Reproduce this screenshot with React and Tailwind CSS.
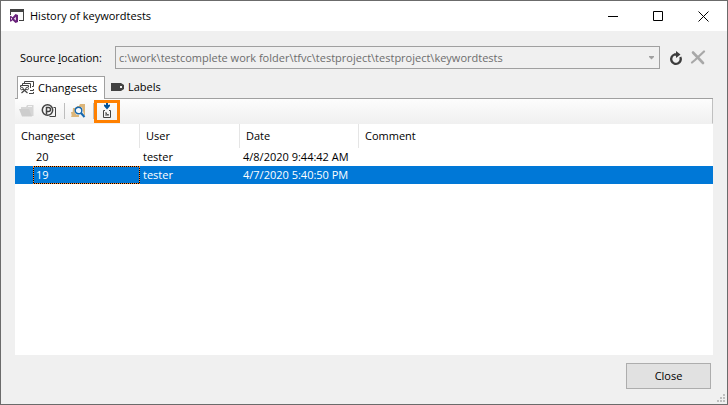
import { useState } from "react";

function VisualStudioIcon() {
  return (
    <svg width="16" height="16" viewBox="0 0 16 16" aria-hidden="true">
      <path d="M1 1h14v12H10v-1h4V4H2v3H1z" fill="#424242" />
      <path d="M2 4h12v8H9V6H2z" fill="#fafafa" />
      <path
        fillRule="evenodd"
        d="M6.500 6 9 7v7l-2.500 1L3.600 12.200 1.800 13.700 1 13.200V8.200l.8-.5 1.800 1.500zM6.800 8.800 5 10.700l1.800 1.900zM2 9.400v2.600l1.200-1.300z"
        fill="#68217a"
      />
    </svg>
  );
}

function ChangesetsIcon() {
  return (
    <svg width="15" height="16" viewBox="0 0 15 16" aria-hidden="true" fill="none" stroke="#424242">
      <path d="M4.500 3V1.500h9v5H12" />
      <path d="M2.500 5V3.500h8v4" />
      <path d="M.5 7V5.500h8V7" />
      <path d="M10 10.500h3.500V9M9 13.500h4.500V12M10 7.500h1" />
      <circle cx="1.800" cy="8.500" r="1.300" />
      <circle cx="7.200" cy="8.500" r="1.300" />
      <path d="M3 9l4.500 4M6 9l-4.500 4" strokeWidth="1.200" />
    </svg>
  );
}

function LabelIcon() {
  return (
    <svg width="14" height="10" viewBox="0 0 14 10" aria-hidden="true">
      <path fillRule="evenodd" d="M0 1h10l3 2v4l-3 2H0zM9 4v2h2V4z" fill="#424242" />
    </svg>
  );
}

function FolderIcon() {
  return (
    <svg width="16" height="16" viewBox="0 0 16 16" aria-hidden="true">
      <path d="M2 6V4h5l1-2h6.500v11H12z" fill="#d6d6d6" />
      <path d="M9 3.500h4" stroke="#f4f4f4" />
      <path d="M0 6h10l3 7.500H3z" fill="#cdcdcd" />
    </svg>
  );
}

function CompareIcon() {
  return (
    <svg width="16" height="16" viewBox="0 0 16 16" aria-hidden="true" fill="none" stroke="#424242">
      <circle cx="6.500" cy="7" r="5.200" strokeWidth="1.500" />
      <path d="M5.500 11.500v-7h2a2 2 0 0 1 0 4h-2" strokeWidth="1.500" />
      <path d="M12.500 4.500h2v9H8.500" />
    </svg>
  );
}

function SearchFolderIcon() {
  return (
    <svg width="16" height="16" viewBox="0 0 16 16" aria-hidden="true">
      <path d="M7 3h2l1-2h5v11h-1L12 4H7z" fill="#dcb67a" />
      <path d="M3 5h3L4.500 8 6 11.500 9 12v2H1l1.500-3z" fill="#dcb67a" />
      <path d="M1 9h3l3 5H2z" fill="#dcb67a" />
      <circle cx="8.500" cy="7.500" r="3.300" fill="#f8fbff" stroke="#1768ad" strokeWidth="1.400" />
      <path d="m11 10 3.500 4" stroke="#1768ad" strokeWidth="2" />
    </svg>
  );
}

function GetVersionIcon() {
  return (
    <svg width="16" height="16" viewBox="0 0 16 16" aria-hidden="true">
      <path d="M7 0h2v2l2-.5V3L8 6.500 5 3V1.500l2 .5z" fill="#00539c" />
      <path d="M6 7.500H4.500v7h7v-7H10" fill="none" stroke="#424242" />
      <path d="M7.500 9.500v2h2" fill="none" stroke="#424242" strokeWidth=".9" />
      <path d="M6.500 9v3.500h3V11" fill="none" stroke="#424242" strokeWidth=".5" />
    </svg>
  );
}

function RefreshIcon() {
  return (
    <svg width="14" height="16" viewBox="0 0 14 16" aria-hidden="true">
      <path d="M8 4.500H5.500A4.800 4.800 0 1 0 11.300 7" fill="none" stroke="#3c3c3c" strokeWidth="2.300" />
      <path d="M7 1l4.500 3.500L7 8z" fill="#3c3c3c" />
    </svg>
  );
}

function DeleteIcon() {
  return (
    <svg width="16" height="16" viewBox="0 0 16 16" aria-hidden="true">
      <path d="M3 2.500 13 13" stroke="#a8a8a8" strokeWidth="2.600" strokeLinecap="round" />
      <path d="M2 12.500 5 10 14 1.500" fill="none" stroke="#a8a8a8" strokeWidth="2.200" strokeLinecap="round" />
    </svg>
  );
}

const changesets = [
  { id: "20", user: "tester", date: "4/8/2020 9:44:42 AM", comment: "" },
  { id: "19", user: "tester", date: "4/7/2020 5:40:50 PM", comment: "" },
];

const windowButton = "flex h-full w-[45px] items-center justify-center";
const headCell = "border-r border-[#e5e5e5] pl-1.5 text-left font-normal";

export default function App() {
  const [selected, setSelected] = useState("19");

  return (
    <div className="flex min-h-screen flex-col border border-[#6b6b6b] bg-[#f0f0f0] font-['Open_Sans','Noto_Sans',sans-serif] text-[11px] leading-4 text-black">
      <header className="flex h-[30px] items-center bg-white pr-px pl-2">
        <VisualStudioIcon />
        <h1 className="ml-[5px] flex-1">History of keywordtests</h1>
        <button aria-label="Minimize" className={windowButton}>
          <svg width="11" height="11" viewBox="0 0 11 11">
            <path d="M0 5.500h10" stroke="#000" />
          </svg>
        </button>
        <button aria-label="Maximize" className={windowButton}>
          <svg width="11" height="11" viewBox="0 0 11 11">
            <path d="M.5 .5h9v9h-9z" fill="none" stroke="#000" />
          </svg>
        </button>
        <button aria-label="Close window" className={windowButton}>
          <svg width="11" height="11" viewBox="0 0 11 11">
            <path d="m.5 .5 10 10m0-10-10 10" stroke="#000" />
          </svg>
        </button>
      </header>

      <div className="mt-[15px] flex h-[23px] items-center pr-5 pl-[19px]">
        <label htmlFor="source" className="w-[95px] shrink-0 whitespace-nowrap">
          Source <span className="underline">l</span>ocation:
        </label>
        <div className="relative h-full min-w-0 flex-1">
          <select
            id="source"
            disabled
            className="h-full w-full appearance-none border border-[#a0a0a0] bg-[#f0f0f0] pl-[3px] text-[#6d6d6d] opacity-100"
          >
            <option>c:\work\testcomplete work folder\tfvc\testproject\testproject\keywordtests</option>
          </select>
          <svg className="absolute top-[10px] right-[5px]" width="7" height="4" viewBox="0 0 7 4" aria-hidden="true">
            <path d="M1 0h5v1L3.500 3.500 1 1z" fill="#a0a0a0" />
          </svg>
        </div>
        <button aria-label="Refresh" className="ml-[9px]">
          <RefreshIcon />
        </button>
        <button aria-label="Delete" disabled className="ml-[7px] mr-px">
          <DeleteIcon />
        </button>
      </div>

      <main className="mx-3.5 mt-[7px] flex flex-1 flex-col">
        <div role="tablist" className="flex h-[23px] border-b border-[#a0a0a0] pl-0.5">
          <button
            role="tab"
            aria-selected="true"
            className="-mb-px flex w-[88px] items-center gap-[3px] border border-b-0 border-[#a0a0a0] bg-white pl-0.5"
          >
            <ChangesetsIcon />
            Changesets
          </button>
          <button role="tab" aria-selected="false" className="flex items-center gap-[3px] px-1.5">
            <LabelIcon />
            Labels
          </button>
        </div>

        <div
          role="toolbar"
          className="flex h-[25px] items-center border-r border-b border-r-[#c0c0c0] border-b-[#f0f0f0] bg-linear-to-b from-[#fdfdfd] to-[#f0f0f0] pl-1"
        >
          <button aria-label="View" disabled>
            <FolderIcon />
          </button>
          <button aria-label="Compare" className="ml-[6px]">
            <CompareIcon />
          </button>
          <span className="ml-[7px] h-4 w-px bg-[#bdbdbd]" />
          <button aria-label="Browse" className="ml-[5px]">
            <SearchFolderIcon />
          </button>
          <span className="ml-[7px] h-4 w-px bg-[#bdbdbd]" />
          <button
            aria-label="Get this version"
            className="flex h-[23px] w-[26px] items-center justify-center border-[3px] border-[#ff8000]"
          >
            <GetVersionIcon />
          </button>
        </div>

        <div className="flex-1 bg-white">
          <table className="w-full table-fixed border-separate border-spacing-0">
            <colgroup>
              <col className="w-[125px]" />
              <col className="w-[100px]" />
              <col className="w-[119px]" />
              <col />
            </colgroup>
            <thead>
              <tr className="h-6">
                <th className={headCell}>Changeset</th>
                <th className={headCell}>User</th>
                <th className={headCell}>Date</th>
                <th className="pl-1.5 text-left font-normal">Comment</th>
              </tr>
            </thead>
            <tbody>
              {changesets.map((row) => {
                const active = row.id === selected;
                return (
                  <tr
                    key={row.id}
                    onClick={() => setSelected(row.id)}
                    className={active ? "h-[18px] bg-[#0078d7] text-white" : "h-[18px]"}
                  >
                    <td className="pl-[18px]">
                      <div
                        className={
                          active
                            ? "h-[18px] border border-dotted border-[#ff8728] bg-linear-to-b from-black to-black bg-origin-border p-0"
                            : "h-[18px] border border-transparent"
                        }
                      >
                        <div className={active ? "h-4 bg-[#0078d7] pl-0.5" : "h-4 pl-0.5"}>{row.id}</div>
                      </div>
                    </td>
                    <td className="pl-[3px]">{row.user}</td>
                    <td className="pl-[3px] whitespace-nowrap">{row.date}</td>
                    <td className="pl-[3px]">{row.comment}</td>
                  </tr>
                );
              })}
            </tbody>
          </table>
        </div>
      </main>

      <footer className="relative flex h-[49px] justify-end pt-2 pr-4">
        <button className="h-[26px] w-[85px] border border-[#adadad] bg-[#e1e1e1]">Close</button>
        <svg className="absolute right-0.5 bottom-0.5" width="8" height="8" viewBox="0 0 8 8" aria-hidden="true">
          <path d="M6 0h2v2H6zM3 3h2v2H3zM6 3h2v2H6zM0 6h2v2H0zM3 6h2v2H3zM6 6h2v2H6z" fill="#bfbfbf" />
        </svg>
      </footer>
    </div>
  );
}
